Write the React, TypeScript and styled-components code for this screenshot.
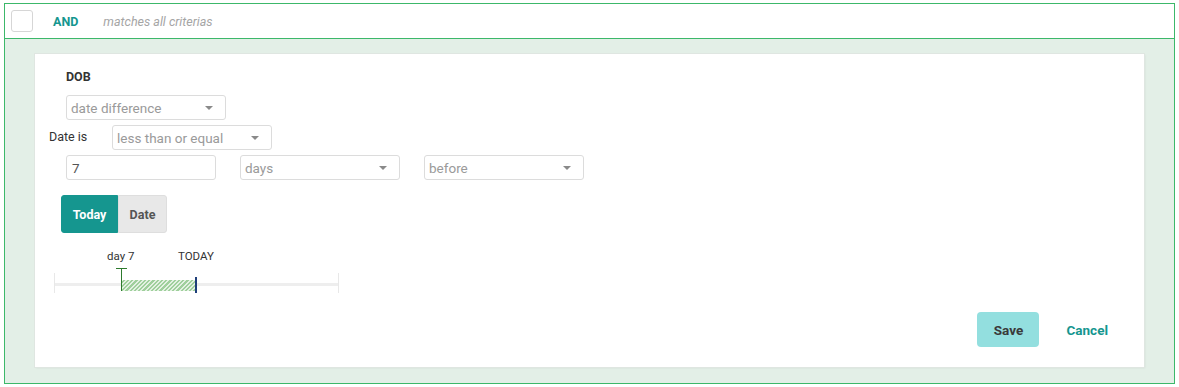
import React from 'react'
import styled, { createGlobalStyle } from 'styled-components'

const colors = {
  green: '#3cb86a',
  teal: '#15968f',
  tealLight: '#93dfdf',
  panel: '#e3efe7',
  border: '#dcdcdc',
  muted: '#9a9a9a',
  text: '#333333',
}

const GlobalStyle = createGlobalStyle`
  body {
    margin: 0;
    background: #fff;
    font-family: Roboto, "Liberation Sans", Arial, sans-serif;
  }
`

const Page = styled.div`
  padding: 3px 4px 3px 4px;
`

const Group = styled.div`
  border: 1px solid ${colors.green};
  width: 1169px;
`

const GroupHeader = styled.div`
  height: 34px;
  display: flex;
  align-items: center;
  padding-left: 6px;
  border-bottom: 1px solid ${colors.green};
  background: #fff;
`

const CheckBox = styled.div`
  width: 20px;
  height: 20px;
  border: 1px solid #d6d6d6;
  border-radius: 3px;
  margin-top: -1px;
`

const Operator = styled.span`
  margin-left: 20px;
  font-size: 12.5px;
  font-weight: 700;
  color: ${colors.teal};
`

const OperatorHint = styled.span`
  margin-left: 25px;
  font-size: 12.5px;
  font-style: italic;
  color: #a5a5a5;
`

const GroupBody = styled.div`
  background: ${colors.panel};
  padding: 15px 30px 16px 30px;
`

const Card = styled.div`
  background: #fff;
  height: 313px;
  box-shadow: 0 0 0 1px #dfe6e1, 1px 1px 2px rgba(0, 0, 0, 0.08);
  padding: 0 36px 0 14px;
  display: flex;
  flex-direction: column;
  position: relative;
`

const FieldName = styled.div`
  margin: 16px 0 0 17px;
  font-size: 12.5px;
  font-weight: 700;
  color: ${colors.text};
  line-height: 14px;
`

const Row = styled.div<{ $top: number }>`
  display: flex;
  align-items: center;
  margin-top: ${(p) => p.$top}px;
  padding-left: 17px;
`

const Label = styled.span`
  width: 63px;
  margin-left: -17px;
  font-size: 12.5px;
  color: ${colors.text};
  align-self: flex-start;
  margin-top: 4px;
`

const Select = styled.div<{ $width: number; $gap?: number }>`
  width: ${(p) => p.$width}px;
  height: 25px;
  box-sizing: border-box;
  border: 1px solid ${colors.border};
  border-radius: 3px;
  display: flex;
  align-items: center;
  justify-content: space-between;
  padding: 0 12px 0 4px;
  margin-left: ${(p) => p.$gap || 0}px;
  font-size: 13.5px;
  color: ${colors.muted};
`

const Caret = styled.span`
  width: 0;
  height: 0;
  border-left: 4px solid transparent;
  border-right: 4px solid transparent;
  border-top: 4px solid #8a8a8a;
`

const Input = styled.div`
  width: 150px;
  height: 25px;
  box-sizing: border-box;
  border: 1px solid ${colors.border};
  border-radius: 3px;
  display: flex;
  align-items: center;
  padding-left: 5px;
  font-size: 13.5px;
  color: #555;
`

const Toggle = styled.div`
  display: flex;
  margin: 15px 0 0 12px;
`

const ToggleButton = styled.div<{ $active?: boolean }>`
  height: 38px;
  box-sizing: border-box;
  display: flex;
  align-items: center;
  justify-content: center;
  font-size: 12.5px;
  font-weight: 700;
  background: ${(p) => (p.$active ? colors.teal : '#e8e8e8')};
  color: ${(p) => (p.$active ? '#fff' : '#555')};
  border: 1px solid ${(p) => (p.$active ? colors.teal : '#dedede')};
  border-radius: ${(p) => (p.$active ? '3px 0 0 3px' : '0 3px 3px 0')};
  width: ${(p) => (p.$active ? 57 : 49)}px;
`

const Timeline = styled.div`
  position: relative;
  width: 290px;
  height: 45px;
  margin: 16px 0 0 5px;
`

const TickLabel = styled.span<{ $left: number }>`
  position: absolute;
  top: 0;
  left: ${(p) => p.$left}px;
  font-size: 11.5px;
  color: ${colors.text};
`

const Track = styled.div`
  position: absolute;
  left: 0;
  top: 34px;
  width: 285px;
  height: 3px;
  background: #eeeeee;
`

const TrackEnd = styled.div<{ $left: number }>`
  position: absolute;
  left: ${(p) => p.$left}px;
  top: 24px;
  width: 1px;
  height: 20px;
  background: #e8e8e8;
`

const Range = styled.div`
  position: absolute;
  left: 67px;
  top: 31px;
  width: 74px;
  height: 11px;
  background: repeating-linear-gradient(
    -45deg,
    #9fcf9c 0px,
    #9fcf9c 1.5px,
    #e3f1e2 1.5px,
    #e3f1e2 3px
  );
`

const StartMarker = styled.div`
  position: absolute;
  left: 67px;
  top: 19px;
  width: 1px;
  height: 23px;
  background: #2d7a2d;
  &::before {
    content: '';
    position: absolute;
    left: -5px;
    top: 0;
    width: 11px;
    height: 1px;
    background: #2d7a2d;
  }
`

const TodayMarker = styled.div`
  position: absolute;
  left: 141px;
  top: 28px;
  width: 2px;
  height: 16px;
  background: #1f3f7a;
`

const Actions = styled.div`
  position: absolute;
  right: 36px;
  bottom: 20px;
  display: flex;
  align-items: center;
  gap: 27px;
`

const SaveButton = styled.div`
  width: 62px;
  height: 35px;
  border-radius: 4px;
  background: ${colors.tealLight};
  color: #3a3a3a;
  font-size: 13.5px;
  font-weight: 700;
  display: flex;
  align-items: center;
  justify-content: center;
`

const CancelButton = styled.div`
  color: ${colors.teal};
  font-size: 13.5px;
  font-weight: 700;
`

const Dropdown = ({ value, width, gap }: any) => (
  <Select $width={width} $gap={gap}>
    <span>{value}</span>
    <Caret />
  </Select>
)

const App = () => {
  return (
    <>
      <GlobalStyle />
      <Page>
        <Group>
          <GroupHeader>
            <CheckBox />
            <Operator>AND</Operator>
            <OperatorHint>matches all criterias</OperatorHint>
          </GroupHeader>
          <GroupBody>
            <Card>
              <FieldName>DOB</FieldName>
              <Row $top={11}>
                <Dropdown value="date difference" width={160} />
              </Row>
              <Row $top={5}>
                <Label>Date is</Label>
                <Dropdown value="less than or equal" width={160} />
              </Row>
              <Row $top={5}>
                <Input>7</Input>
                <Dropdown value="days" width={160} gap={24} />
                <Dropdown value="before" width={160} gap={24} />
              </Row>
              <Toggle>
                <ToggleButton $active>Today</ToggleButton>
                <ToggleButton>Date</ToggleButton>
              </Toggle>
              <Timeline>
                <TickLabel $left={53}>day 7</TickLabel>
                <TickLabel $left={124}>TODAY</TickLabel>
                <Track />
                <TrackEnd $left={0} />
                <TrackEnd $left={284} />
                <Range />
                <StartMarker />
                <TodayMarker />
              </Timeline>
              <Actions>
                <SaveButton>Save</SaveButton>
                <CancelButton>Cancel</CancelButton>
              </Actions>
            </Card>
          </GroupBody>
        </Group>
      </Page>
    </>
  )
}

export default App
